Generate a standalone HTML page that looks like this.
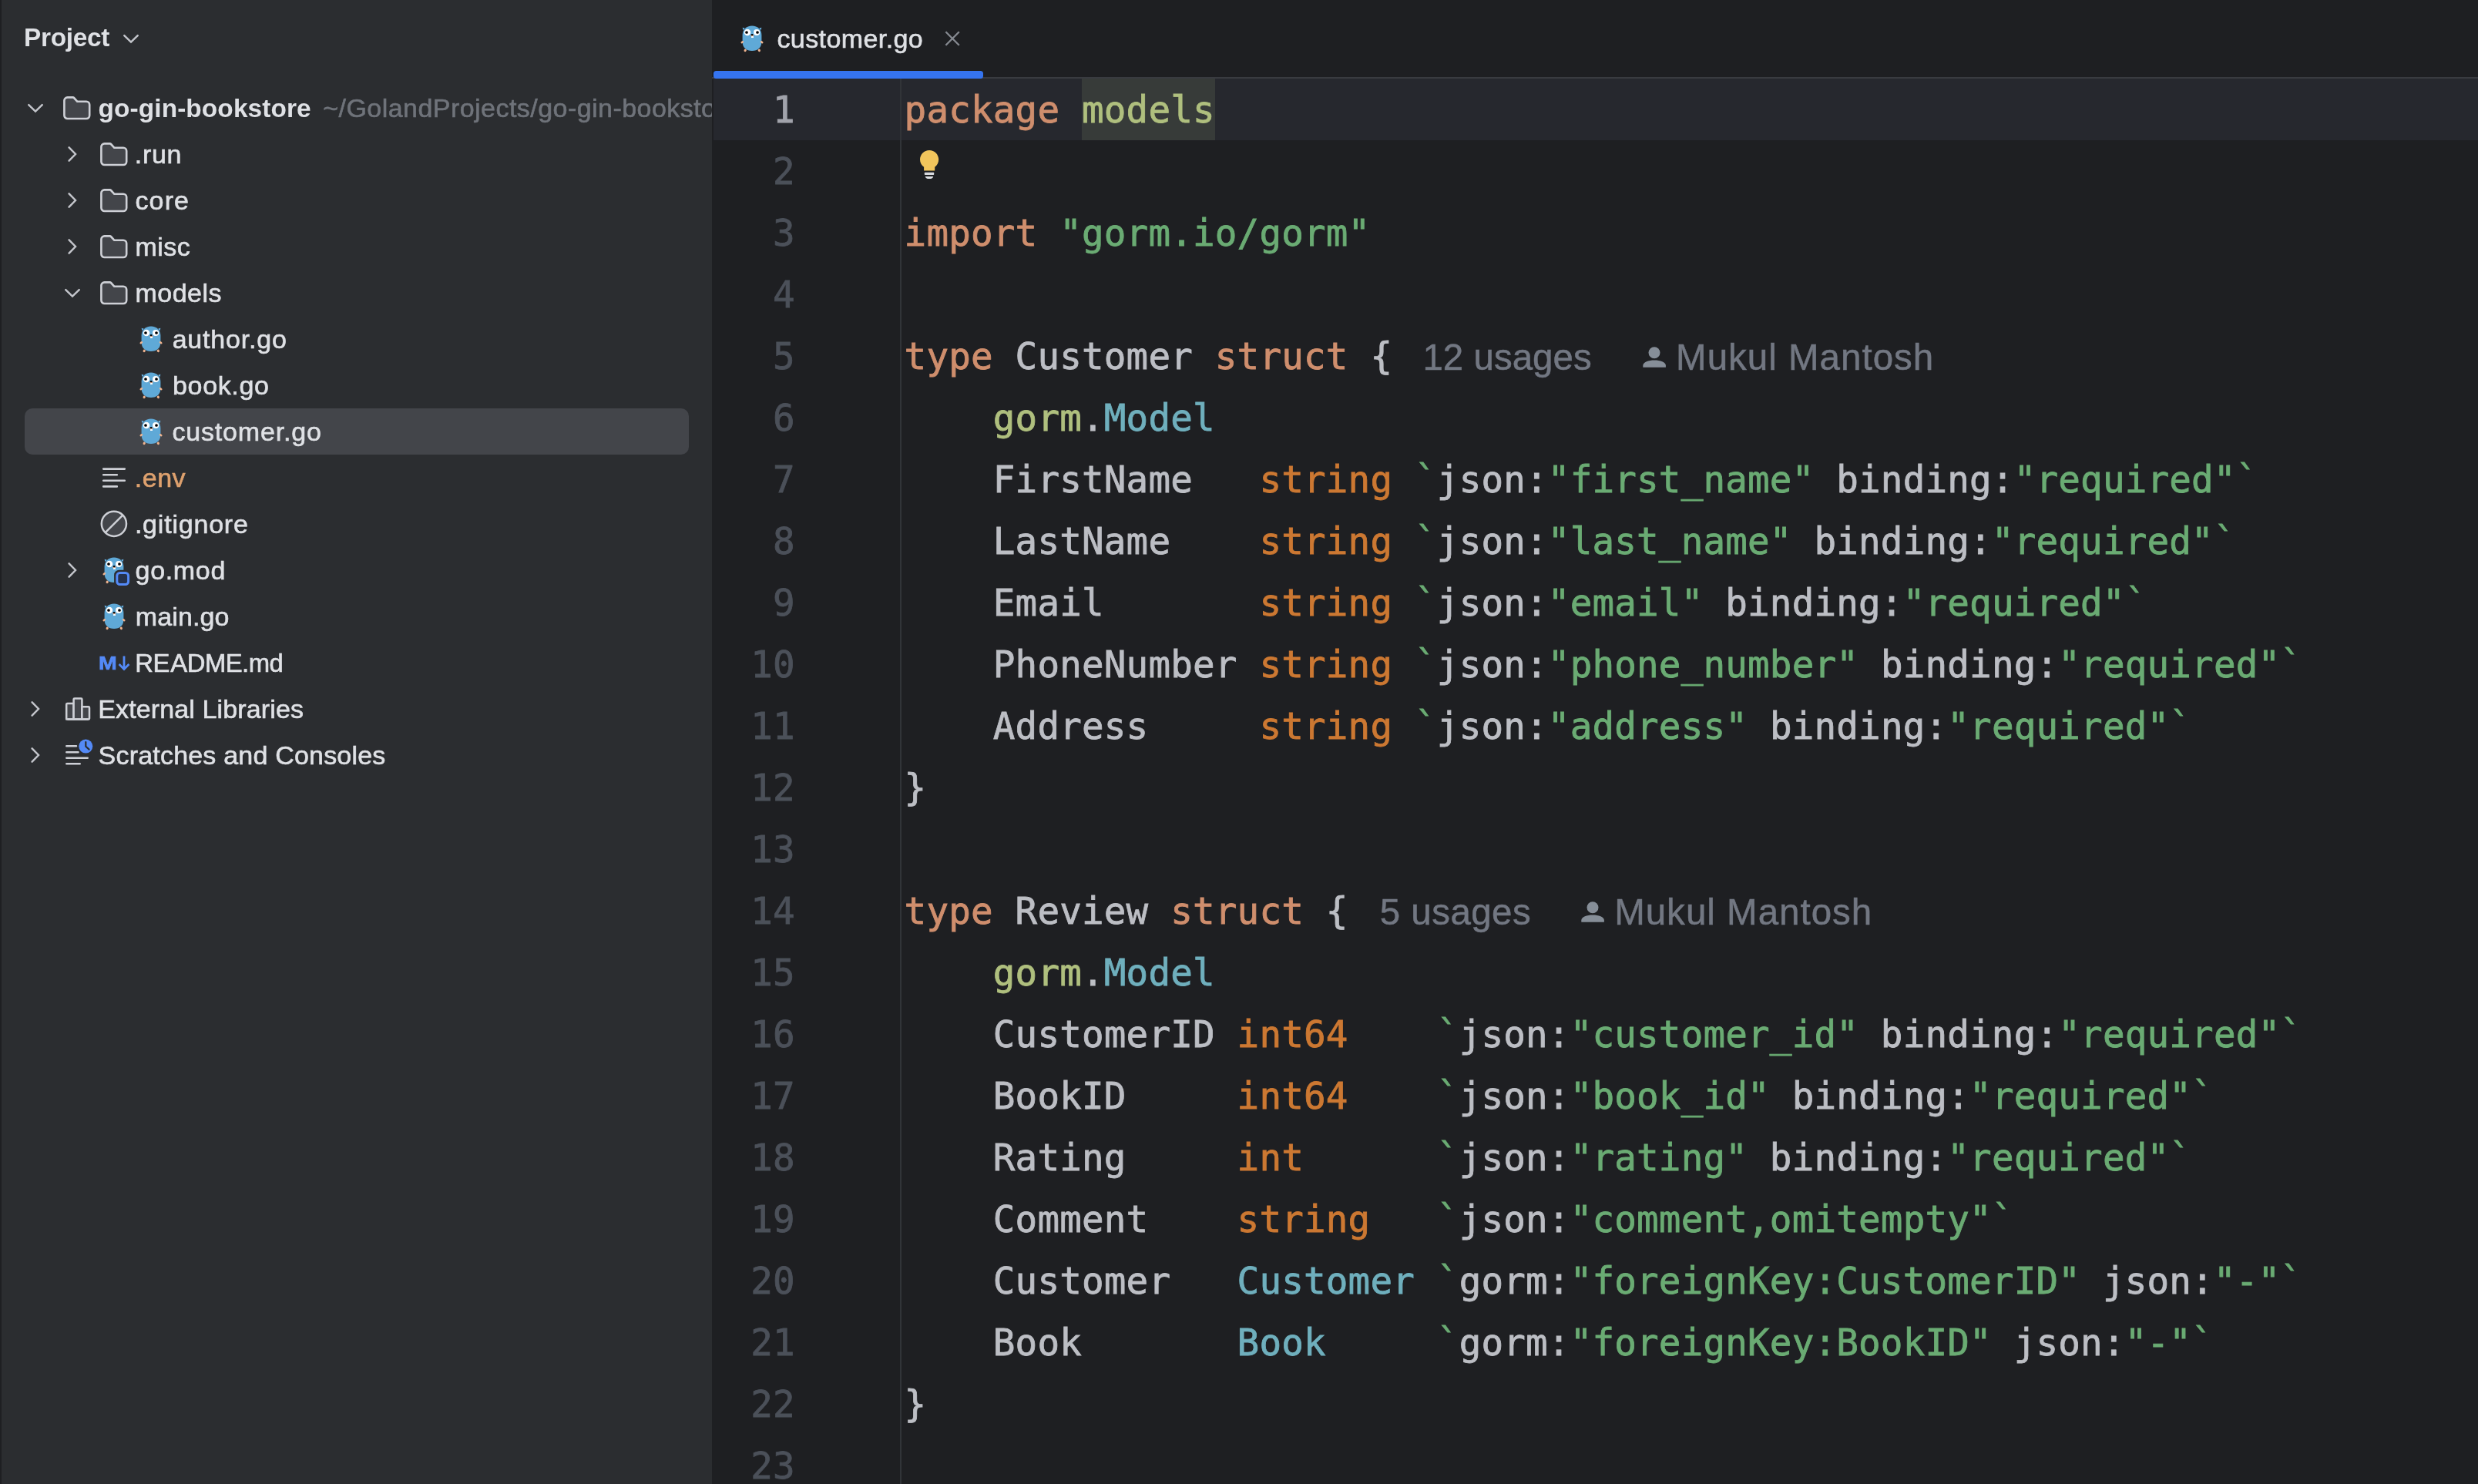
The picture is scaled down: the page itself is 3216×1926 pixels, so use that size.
<!DOCTYPE html>
<html lang="en"><head><meta charset="utf-8"><title>customer.go</title>
<style>
*{box-sizing:border-box}
html,body{margin:0;padding:0;width:3216px;height:1926px;overflow:hidden;background:#1e1f22}
body{position:relative;font-family:"Liberation Sans", "DejaVu Sans", sans-serif;-webkit-font-smoothing:antialiased}
.ic{position:absolute;display:block;overflow:visible}
#sidebg{position:absolute;left:0;top:0;width:924px;height:1926px;background:#2b2d30}
#side{position:absolute;left:0;top:0;width:924px;height:1926px;overflow:hidden;will-change:transform}
.edge{position:absolute;left:0;top:0;width:2px;height:1926px;background:#1e1f22}
.hdr{position:absolute;left:31px;top:19px;height:60px;line-height:60px;font-size:33.4px;font-weight:bold;color:#dfe1e5;white-space:nowrap}
.sel{position:absolute;left:32px;top:530px;width:862px;height:60px;border-radius:10px;background:#43454a}
.rt{position:absolute;height:60px;line-height:60px;font-size:34px;color:#dfe1e5;white-space:nowrap;-webkit-text-stroke-width:0.6px}
.rt.b{font-weight:bold;font-size:33.4px;-webkit-text-stroke-width:0;margin-top:1px}
.rt.g{color:#6f737a}
.md{position:absolute;height:60px;line-height:60px;font-size:24.6px;font-weight:bold;color:#548af7;-webkit-text-stroke:0.7px #548af7;transform:scaleX(1.16);transform-origin:left center}
#ed{position:absolute;left:0;top:0;width:3216px;height:1926px;will-change:transform}
.tabline{position:absolute;left:924px;top:100px;width:2292px;height:2px;background:#393b40}
.tabsel{position:absolute;left:926px;top:92px;width:350px;height:10px;background:#3574f0;border-radius:3.5px}
.tabt{position:absolute;left:1006px;top:20px;height:60px;line-height:60px;font-size:34px;color:#dfe1e5;white-space:nowrap;-webkit-text-stroke-width:0.6px}
.caret{position:absolute;left:926px;top:102px;width:2290px;height:80px;background:#26282e}
.gl{position:absolute;left:1168px;top:102px;width:2px;height:1824px;background:#313438}
.lns{position:absolute;left:926px;top:103px;width:105.8px;font-family:"DejaVu Sans Mono", "Liberation Mono", monospace;font-size:47.5px;letter-spacing:0.203px;color:#4b5059;text-align:right;-webkit-text-stroke-width:0.8px}
.lns div{height:80px;line-height:80px}
.lns .cur{color:#a1a3ab}
.code{position:absolute;left:1173.6px;top:103px;font-family:"DejaVu Sans Mono", "Liberation Mono", monospace;font-size:47.5px;letter-spacing:0.203px;color:#bcbec4;-webkit-text-stroke-width:0.8px}
.l{height:80px;line-height:80px;white-space:pre;overflow:visible}
.ck{color:#cf8e6d}.cs{color:#6aab73}.ct{color:#6fafbd}.cp,.ph{color:#afbf7e}.cb{color:#cc7832}
.ph{background:#373b39;display:inline-block;height:80px;vertical-align:top;margin-top:-1px;padding-top:1px}
.hint{position:absolute;height:80px;line-height:80px;font-size:47.5px;color:#727782;white-space:nowrap;-webkit-text-stroke-width:0.5px}
</style></head>
<body>
<div id="ed">
<div class="tabline"></div><div class="tabsel"></div>
<svg class="ic" style="left:958px;top:30px" width="40" height="44" viewBox="0 0 40 44"><g><path d="M5.7 5.8 L8.8 6.7 L6.3 9.1 Z" fill="#6ab7ea"/><path d="M30.3 5.8 L27.2 6.7 L29.7 9.1 Z" fill="#6ab7ea"/><ellipse cx="9.2" cy="35.4" rx="1.6" ry="1.8" transform="rotate(25 9.2 35.4)" fill="#f0b48f"/><ellipse cx="27.3" cy="35.4" rx="1.6" ry="1.8" transform="rotate(-25 27.3 35.4)" fill="#f0b48f"/><path d="M18 3.5 C25.6 3.5 30.4 8.6 30.4 15.8 V24.2 C30.4 31.4 25.6 36 18 36 C10.4 36 5.6 31.4 5.6 24.2 V15.8 C5.6 8.6 10.4 3.5 18 3.5 Z" fill="#5fa9d7"/><ellipse cx="5.3" cy="24.7" rx="2.1" ry="1.4" transform="rotate(-40 5.3 24.7)" fill="#f0b48f"/><ellipse cx="30.7" cy="24.7" rx="2.1" ry="1.4" transform="rotate(40 30.7 24.7)" fill="#f0b48f"/><circle cx="12" cy="12" r="4.25" fill="#fff"/><circle cx="24.1" cy="12" r="4.1" fill="#fff"/><circle cx="11" cy="12" r="1.85" fill="#000"/><circle cx="25" cy="12" r="1.85" fill="#000"/><ellipse cx="18.3" cy="16.3" rx="2.3" ry="1.2" fill="#d9a78c"/><ellipse cx="18.1" cy="15.2" rx="1.4" ry="1.1" fill="#000"/><rect x="17" y="17.1" width="3" height="2" rx=".4" fill="#fff"/></g></svg>
<div class="tabt" id="tabt" style="left:1008.48px;letter-spacing:0.403px">customer.go</div>
<svg class="ic" style="left:1224px;top:38px" width="24" height="24" viewBox="0 0 24 24"><path d="M3.4 3.2 L20.8 20.8 M20.8 3.2 L3.4 20.8" stroke="#868a91" stroke-width="2.3" fill="none"/></svg>
<div class="caret"></div><div class="gl"></div>
<svg class="ic" style="left:1193px;top:194px" width="27" height="40" viewBox="0 0 27 40"><path d="M13.1 .9 C19.8 .9 25.2 6.3 25.2 13 C25.2 17.4 23 20.6 20.2 22.7 V27.4 H6.1 V22.7 C3.2 20.6 1 17.4 1 13 C1 6.3 6.4 .9 13.1 .9 Z" fill="#f2c55c"/><rect x="6.8" y="29.8" width="12.4" height="3.1" rx=".7" fill="#d7d9de"/><path d="M7.8 34.9 H18.2 C18.2 36.9 16.2 38.1 13 38.1 C9.8 38.1 7.8 36.9 7.8 34.9 Z" fill="#dfe1e5"/></svg>
<div class="lns">
<div class=cur>1</div>
<div>2</div>
<div>3</div>
<div>4</div>
<div>5</div>
<div>6</div>
<div>7</div>
<div>8</div>
<div>9</div>
<div>10</div>
<div>11</div>
<div>12</div>
<div>13</div>
<div>14</div>
<div>15</div>
<div>16</div>
<div>17</div>
<div>18</div>
<div>19</div>
<div>20</div>
<div>21</div>
<div>22</div>
<div>23</div>
</div>
<div class="code">
<div class="l"><span class="ck">package</span> <span class="ph">models</span></div>
<div class="l">&nbsp;</div>
<div class="l"><span class="ck">import</span> <span class="cs">"gorm.io/gorm"</span></div>
<div class="l">&nbsp;</div>
<div class="l"><span class="ck">type</span> Customer <span class="ck">struct</span> {</div>
<div class="l">    <span class="cp">gorm</span>.<span class="ct">Model</span></div>
<div class="l">    FirstName   <span class="cb">string</span> <span class="cs">`</span>json:<span class="cs">"first_name"</span> binding:<span class="cs">"required"`</span></div>
<div class="l">    LastName    <span class="cb">string</span> <span class="cs">`</span>json:<span class="cs">"last_name"</span> binding:<span class="cs">"required"`</span></div>
<div class="l">    Email       <span class="cb">string</span> <span class="cs">`</span>json:<span class="cs">"email"</span> binding:<span class="cs">"required"`</span></div>
<div class="l">    PhoneNumber <span class="cb">string</span> <span class="cs">`</span>json:<span class="cs">"phone_number"</span> binding:<span class="cs">"required"`</span></div>
<div class="l">    Address     <span class="cb">string</span> <span class="cs">`</span>json:<span class="cs">"address"</span> binding:<span class="cs">"required"`</span></div>
<div class="l">}</div>
<div class="l">&nbsp;</div>
<div class="l"><span class="ck">type</span> Review <span class="ck">struct</span> {</div>
<div class="l">    <span class="cp">gorm</span>.<span class="ct">Model</span></div>
<div class="l">    CustomerID <span class="cb">int64</span>    <span class="cs">`</span>json:<span class="cs">"customer_id"</span> binding:<span class="cs">"required"`</span></div>
<div class="l">    BookID     <span class="cb">int64</span>    <span class="cs">`</span>json:<span class="cs">"book_id"</span> binding:<span class="cs">"required"`</span></div>
<div class="l">    Rating     <span class="cb">int</span>      <span class="cs">`</span>json:<span class="cs">"rating"</span> binding:<span class="cs">"required"`</span></div>
<div class="l">    Comment    <span class="cb">string</span>   <span class="cs">`</span>json:<span class="cs">"comment,omitempty"`</span></div>
<div class="l">    Customer   <span class="ct">Customer</span> <span class="cs">`</span>gorm:<span class="cs">"foreignKey:CustomerID"</span> json:<span class="cs">"-"`</span></div>
<div class="l">    Book       <span class="ct">Book</span>     <span class="cs">`</span>gorm:<span class="cs">"foreignKey:BookID"</span> json:<span class="cs">"-"`</span></div>
<div class="l">}</div>
<div class="l">&nbsp;</div>
</div>
<div class="hint" id="h1" style="left:1846.4px;top:424.4px;letter-spacing:0.016px">12 usages</div>
<svg class="ic" style="left:2131.2px;top:450.2px" width="32" height="28" viewBox="0 0 32 28"><circle cx="16" cy="7.8" r="7.5" fill="#868e98"/><path d="M1.3 26.8 V24.4 C1.3 20 8.5 17.6 16.1 17.6 C23.7 17.6 30.9 20 30.9 24.4 V26.8 Z" fill="#868e98"/></svg>
<div class="hint" id="h2" style="left:2175.11px;top:424.4px;letter-spacing:1.003px">Mukul Mantosh</div>
<div class="hint" id="h3" style="left:1790.86px;top:1144.4px;letter-spacing:0.436px">5 usages</div>
<svg class="ic" style="left:2051.0px;top:1170.2px" width="32" height="28" viewBox="0 0 32 28"><circle cx="16" cy="7.8" r="7.5" fill="#868e98"/><path d="M1.3 26.8 V24.4 C1.3 20 8.5 17.6 16.1 17.6 C23.7 17.6 30.9 20 30.9 24.4 V26.8 Z" fill="#868e98"/></svg>
<div class="hint" id="h4" style="left:2095.14px;top:1144.4px;letter-spacing:1.006px">Mukul Mantosh</div>
</div>
<div id="sidebg"></div>
<div id="side">
<div class="edge"></div>
<div class="hdr" id="hdr" style="left:31.1px;letter-spacing:-0.329px">Project</div>
<svg class="ic" style="left:157.3px;top:42.2px" width="26" height="16" viewBox="0 0 26 16"><path d="M4.3 4.1 L13 12.6 L21.7 4.1" fill="none" stroke="#c3c5cb" stroke-width="2.5" stroke-linecap="round" stroke-linejoin="miter"/></svg>
<div class="sel"></div>
<svg class="ic" style="left:33px;top:132.2px" width="26" height="16" viewBox="0 0 26 16"><path d="M4.3 4.1 L13 12.6 L21.7 4.1" fill="none" stroke="#c3c5cb" stroke-width="2.5" stroke-linecap="round" stroke-linejoin="miter"/></svg>
<svg class="ic" style="left:82px;top:124.5px" width="36" height="31" viewBox="0 0 36 31"><path d="M1.4 5.6 A4.2 4.2 0 0 1 5.6 1.4 H12.5 a2 2 0 0 1 1.5 .6 L18.4 6.8 H30 A4.2 4.2 0 0 1 34.2 11 V24.8 A4.2 4.2 0 0 1 30 29 H5.6 A4.2 4.2 0 0 1 1.4 24.8 Z" fill="#43454a" stroke="#ced0d6" stroke-width="2.6" stroke-linejoin="round"/></svg>
<div class="rt b" id="r0" style="left:127.52px;top:110px;letter-spacing:0.107px;">go-gin-bookstore</div>
<div class="rt g" style="left:419.2px;top:110px;letter-spacing:0.457px"><span id="rx" class="sub">~/GolandProjects/go-gin-bookst</span>ore</div>
<svg class="ic" style="left:86px;top:187px" width="16" height="26" viewBox="0 0 16 26"><path d="M3.6 4.3 L12 13 L3.6 21.7" fill="none" stroke="#c3c5cb" stroke-width="2.5" stroke-linecap="round" stroke-linejoin="miter"/></svg>
<svg class="ic" style="left:130px;top:184.5px" width="36" height="31" viewBox="0 0 36 31"><path d="M1.4 5.6 A4.2 4.2 0 0 1 5.6 1.4 H12.5 a2 2 0 0 1 1.5 .6 L18.4 6.8 H30 A4.2 4.2 0 0 1 34.2 11 V24.8 A4.2 4.2 0 0 1 30 29 H5.6 A4.2 4.2 0 0 1 1.4 24.8 Z" fill="#43454a" stroke="#ced0d6" stroke-width="2.6" stroke-linejoin="round"/></svg>
<div class="rt" id="r1" style="left:174.72px;top:170px;letter-spacing:0.731px;">.run</div>
<svg class="ic" style="left:86px;top:247px" width="16" height="26" viewBox="0 0 16 26"><path d="M3.6 4.3 L12 13 L3.6 21.7" fill="none" stroke="#c3c5cb" stroke-width="2.5" stroke-linecap="round" stroke-linejoin="miter"/></svg>
<svg class="ic" style="left:130px;top:244.5px" width="36" height="31" viewBox="0 0 36 31"><path d="M1.4 5.6 A4.2 4.2 0 0 1 5.6 1.4 H12.5 a2 2 0 0 1 1.5 .6 L18.4 6.8 H30 A4.2 4.2 0 0 1 34.2 11 V24.8 A4.2 4.2 0 0 1 30 29 H5.6 A4.2 4.2 0 0 1 1.4 24.8 Z" fill="#43454a" stroke="#ced0d6" stroke-width="2.6" stroke-linejoin="round"/></svg>
<div class="rt" id="r2" style="left:175.43px;top:230px;letter-spacing:1.156px;">core</div>
<svg class="ic" style="left:86px;top:307px" width="16" height="26" viewBox="0 0 16 26"><path d="M3.6 4.3 L12 13 L3.6 21.7" fill="none" stroke="#c3c5cb" stroke-width="2.5" stroke-linecap="round" stroke-linejoin="miter"/></svg>
<svg class="ic" style="left:130px;top:304.5px" width="36" height="31" viewBox="0 0 36 31"><path d="M1.4 5.6 A4.2 4.2 0 0 1 5.6 1.4 H12.5 a2 2 0 0 1 1.5 .6 L18.4 6.8 H30 A4.2 4.2 0 0 1 34.2 11 V24.8 A4.2 4.2 0 0 1 30 29 H5.6 A4.2 4.2 0 0 1 1.4 24.8 Z" fill="#43454a" stroke="#ced0d6" stroke-width="2.6" stroke-linejoin="round"/></svg>
<div class="rt" id="r3" style="left:175.44px;top:290px;letter-spacing:0.502px;">misc</div>
<svg class="ic" style="left:81px;top:372.2px" width="26" height="16" viewBox="0 0 26 16"><path d="M4.3 4.1 L13 12.6 L21.7 4.1" fill="none" stroke="#c3c5cb" stroke-width="2.5" stroke-linecap="round" stroke-linejoin="miter"/></svg>
<svg class="ic" style="left:130px;top:364.5px" width="36" height="31" viewBox="0 0 36 31"><path d="M1.4 5.6 A4.2 4.2 0 0 1 5.6 1.4 H12.5 a2 2 0 0 1 1.5 .6 L18.4 6.8 H30 A4.2 4.2 0 0 1 34.2 11 V24.8 A4.2 4.2 0 0 1 30 29 H5.6 A4.2 4.2 0 0 1 1.4 24.8 Z" fill="#43454a" stroke="#ced0d6" stroke-width="2.6" stroke-linejoin="round"/></svg>
<div class="rt" id="r4" style="left:175.44px;top:350px;letter-spacing:0.5px;">models</div>
<svg class="ic" style="left:178px;top:420px" width="40" height="44" viewBox="0 0 40 44"><g><path d="M5.7 5.8 L8.8 6.7 L6.3 9.1 Z" fill="#6ab7ea"/><path d="M30.3 5.8 L27.2 6.7 L29.7 9.1 Z" fill="#6ab7ea"/><ellipse cx="9.2" cy="35.4" rx="1.6" ry="1.8" transform="rotate(25 9.2 35.4)" fill="#f0b48f"/><ellipse cx="27.3" cy="35.4" rx="1.6" ry="1.8" transform="rotate(-25 27.3 35.4)" fill="#f0b48f"/><path d="M18 3.5 C25.6 3.5 30.4 8.6 30.4 15.8 V24.2 C30.4 31.4 25.6 36 18 36 C10.4 36 5.6 31.4 5.6 24.2 V15.8 C5.6 8.6 10.4 3.5 18 3.5 Z" fill="#5fa9d7"/><ellipse cx="5.3" cy="24.7" rx="2.1" ry="1.4" transform="rotate(-40 5.3 24.7)" fill="#f0b48f"/><ellipse cx="30.7" cy="24.7" rx="2.1" ry="1.4" transform="rotate(40 30.7 24.7)" fill="#f0b48f"/><circle cx="12" cy="12" r="4.25" fill="#fff"/><circle cx="24.1" cy="12" r="4.1" fill="#fff"/><circle cx="11" cy="12" r="1.85" fill="#000"/><circle cx="25" cy="12" r="1.85" fill="#000"/><ellipse cx="18.3" cy="16.3" rx="2.3" ry="1.2" fill="#d9a78c"/><ellipse cx="18.1" cy="15.2" rx="1.4" ry="1.1" fill="#000"/><rect x="17" y="17.1" width="3" height="2" rx=".4" fill="#fff"/></g></svg>
<div class="rt" id="r5" style="left:223.65px;top:410px;letter-spacing:0.799px;">author.go</div>
<svg class="ic" style="left:178px;top:480px" width="40" height="44" viewBox="0 0 40 44"><g><path d="M5.7 5.8 L8.8 6.7 L6.3 9.1 Z" fill="#6ab7ea"/><path d="M30.3 5.8 L27.2 6.7 L29.7 9.1 Z" fill="#6ab7ea"/><ellipse cx="9.2" cy="35.4" rx="1.6" ry="1.8" transform="rotate(25 9.2 35.4)" fill="#f0b48f"/><ellipse cx="27.3" cy="35.4" rx="1.6" ry="1.8" transform="rotate(-25 27.3 35.4)" fill="#f0b48f"/><path d="M18 3.5 C25.6 3.5 30.4 8.6 30.4 15.8 V24.2 C30.4 31.4 25.6 36 18 36 C10.4 36 5.6 31.4 5.6 24.2 V15.8 C5.6 8.6 10.4 3.5 18 3.5 Z" fill="#5fa9d7"/><ellipse cx="5.3" cy="24.7" rx="2.1" ry="1.4" transform="rotate(-40 5.3 24.7)" fill="#f0b48f"/><ellipse cx="30.7" cy="24.7" rx="2.1" ry="1.4" transform="rotate(40 30.7 24.7)" fill="#f0b48f"/><circle cx="12" cy="12" r="4.25" fill="#fff"/><circle cx="24.1" cy="12" r="4.1" fill="#fff"/><circle cx="11" cy="12" r="1.85" fill="#000"/><circle cx="25" cy="12" r="1.85" fill="#000"/><ellipse cx="18.3" cy="16.3" rx="2.3" ry="1.2" fill="#d9a78c"/><ellipse cx="18.1" cy="15.2" rx="1.4" ry="1.1" fill="#000"/><rect x="17" y="17.1" width="3" height="2" rx=".4" fill="#fff"/></g></svg>
<div class="rt" id="r6" style="left:224.06px;top:470px;letter-spacing:0.643px;">book.go</div>
<svg class="ic" style="left:178px;top:540px" width="40" height="44" viewBox="0 0 40 44"><g><path d="M5.7 5.8 L8.8 6.7 L6.3 9.1 Z" fill="#6ab7ea"/><path d="M30.3 5.8 L27.2 6.7 L29.7 9.1 Z" fill="#6ab7ea"/><ellipse cx="9.2" cy="35.4" rx="1.6" ry="1.8" transform="rotate(25 9.2 35.4)" fill="#f0b48f"/><ellipse cx="27.3" cy="35.4" rx="1.6" ry="1.8" transform="rotate(-25 27.3 35.4)" fill="#f0b48f"/><path d="M18 3.5 C25.6 3.5 30.4 8.6 30.4 15.8 V24.2 C30.4 31.4 25.6 36 18 36 C10.4 36 5.6 31.4 5.6 24.2 V15.8 C5.6 8.6 10.4 3.5 18 3.5 Z" fill="#5fa9d7"/><ellipse cx="5.3" cy="24.7" rx="2.1" ry="1.4" transform="rotate(-40 5.3 24.7)" fill="#f0b48f"/><ellipse cx="30.7" cy="24.7" rx="2.1" ry="1.4" transform="rotate(40 30.7 24.7)" fill="#f0b48f"/><circle cx="12" cy="12" r="4.25" fill="#fff"/><circle cx="24.1" cy="12" r="4.1" fill="#fff"/><circle cx="11" cy="12" r="1.85" fill="#000"/><circle cx="25" cy="12" r="1.85" fill="#000"/><ellipse cx="18.3" cy="16.3" rx="2.3" ry="1.2" fill="#d9a78c"/><ellipse cx="18.1" cy="15.2" rx="1.4" ry="1.1" fill="#000"/><rect x="17" y="17.1" width="3" height="2" rx=".4" fill="#fff"/></g></svg>
<div class="rt" id="r7" style="left:223.53px;top:530px;letter-spacing:0.808px;">customer.go</div>
<svg class="ic" style="left:130px;top:604px" width="36" height="32" viewBox="0 0 36 32"><g stroke="#ced0d6" stroke-width="2.6" stroke-linecap="round"><path d="M4.2 4.6 H31.8 M4.2 12.2 H21.8 M4.2 19.8 H31.8 M4.2 27.4 H21.8"/></g></svg>
<div class="rt" id="r8" style="left:174.83px;top:590px;letter-spacing:0.475px;color:#dea16e;">.env</div>
<svg class="ic" style="left:130px;top:662px" width="36" height="36" viewBox="0 0 36 36"><circle cx="17.9" cy="17.8" r="16.1" fill="#43454a" stroke="#ced0d6" stroke-width="2.5"/><path d="M7 28.8 L29 6.8" stroke="#ced0d6" stroke-width="2.5"/></svg>
<div class="rt" id="r9" style="left:174.88px;top:650px;letter-spacing:0.79px;">.gitignore</div>
<svg class="ic" style="left:86px;top:727px" width="16" height="26" viewBox="0 0 16 26"><path d="M3.6 4.3 L12 13 L3.6 21.7" fill="none" stroke="#c3c5cb" stroke-width="2.5" stroke-linecap="round" stroke-linejoin="miter"/></svg>
<svg class="ic" style="left:130px;top:720px" width="40" height="44" viewBox="0 0 40 44"><defs><mask id="gm"><rect width="40" height="44" fill="#fff"/><rect x="18.1" y="19.7" width="22.2" height="22.5" rx="6.5" fill="#000"/></mask></defs><g mask="url(#gm)"><path d="M5.7 5.8 L8.8 6.7 L6.3 9.1 Z" fill="#6ab7ea"/><path d="M30.3 5.8 L27.2 6.7 L29.7 9.1 Z" fill="#6ab7ea"/><ellipse cx="9.2" cy="35.4" rx="1.6" ry="1.8" transform="rotate(25 9.2 35.4)" fill="#f0b48f"/><ellipse cx="27.3" cy="35.4" rx="1.6" ry="1.8" transform="rotate(-25 27.3 35.4)" fill="#f0b48f"/><path d="M18 3.5 C25.6 3.5 30.4 8.6 30.4 15.8 V24.2 C30.4 31.4 25.6 36 18 36 C10.4 36 5.6 31.4 5.6 24.2 V15.8 C5.6 8.6 10.4 3.5 18 3.5 Z" fill="#5fa9d7"/><ellipse cx="5.3" cy="24.7" rx="2.1" ry="1.4" transform="rotate(-40 5.3 24.7)" fill="#f0b48f"/><ellipse cx="30.7" cy="24.7" rx="2.1" ry="1.4" transform="rotate(40 30.7 24.7)" fill="#f0b48f"/><circle cx="12" cy="12" r="4.25" fill="#fff"/><circle cx="24.1" cy="12" r="4.1" fill="#fff"/><circle cx="11" cy="12" r="1.85" fill="#000"/><circle cx="25" cy="12" r="1.85" fill="#000"/><ellipse cx="18.3" cy="16.3" rx="2.3" ry="1.2" fill="#d9a78c"/><ellipse cx="18.1" cy="15.2" rx="1.4" ry="1.1" fill="#000"/><rect x="17" y="17.1" width="3" height="2" rx=".4" fill="#fff"/></g><rect x="21.8" y="23.4" width="14.8" height="15.1" rx="3.8" fill="#25324d" stroke="#548af7" stroke-width="3"/></svg>
<div class="rt" id="r10" style="left:175.57px;top:710px;letter-spacing:0.669px;">go.mod</div>
<svg class="ic" style="left:130px;top:780px" width="40" height="44" viewBox="0 0 40 44"><g><path d="M5.7 5.8 L8.8 6.7 L6.3 9.1 Z" fill="#6ab7ea"/><path d="M30.3 5.8 L27.2 6.7 L29.7 9.1 Z" fill="#6ab7ea"/><ellipse cx="9.2" cy="35.4" rx="1.6" ry="1.8" transform="rotate(25 9.2 35.4)" fill="#f0b48f"/><ellipse cx="27.3" cy="35.4" rx="1.6" ry="1.8" transform="rotate(-25 27.3 35.4)" fill="#f0b48f"/><path d="M18 3.5 C25.6 3.5 30.4 8.6 30.4 15.8 V24.2 C30.4 31.4 25.6 36 18 36 C10.4 36 5.6 31.4 5.6 24.2 V15.8 C5.6 8.6 10.4 3.5 18 3.5 Z" fill="#5fa9d7"/><ellipse cx="5.3" cy="24.7" rx="2.1" ry="1.4" transform="rotate(-40 5.3 24.7)" fill="#f0b48f"/><ellipse cx="30.7" cy="24.7" rx="2.1" ry="1.4" transform="rotate(40 30.7 24.7)" fill="#f0b48f"/><circle cx="12" cy="12" r="4.25" fill="#fff"/><circle cx="24.1" cy="12" r="4.1" fill="#fff"/><circle cx="11" cy="12" r="1.85" fill="#000"/><circle cx="25" cy="12" r="1.85" fill="#000"/><ellipse cx="18.3" cy="16.3" rx="2.3" ry="1.2" fill="#d9a78c"/><ellipse cx="18.1" cy="15.2" rx="1.4" ry="1.1" fill="#000"/><rect x="17" y="17.1" width="3" height="2" rx=".4" fill="#fff"/></g></svg>
<div class="rt" id="r11" style="left:175.74px;top:770px;letter-spacing:0.119px;">main.go</div>
<span class="md" style="left:127.7px;top:831px">M</span><svg class="ic" style="left:152px;top:848px" width="18" height="24" viewBox="0 0 18 24"><path d="M9 3.6 V20.4 M2.6 14 L9 20.6 L15.4 14" fill="none" stroke="#548af7" stroke-width="2.8" stroke-linejoin="miter"/></svg>
<div class="rt" id="r12" style="left:175.21px;top:830px;letter-spacing:-0.489px;font-size:32.8px;margin-top:1px;">R<span style="letter-spacing:1px">E</span>ADME.md</div>
<svg class="ic" style="left:38px;top:907px" width="16" height="26" viewBox="0 0 16 26"><path d="M3.6 4.3 L12 13 L3.6 21.7" fill="none" stroke="#c3c5cb" stroke-width="2.5" stroke-linecap="round" stroke-linejoin="miter"/></svg>
<svg class="ic" style="left:81.5px;top:904px" width="36" height="32" viewBox="0 0 36 32"><g fill="#43454a" stroke="#ced0d6" stroke-width="2.5" stroke-linejoin="round"><path d="M4.2 29.6 V10.2 a1.2 1.2 0 0 1 1.2 -1.2 H13.6 V29.6 Z"/><path d="M13.6 29.6 V3.6 a1.2 1.2 0 0 1 1.2 -1.2 H23.2 a1.2 1.2 0 0 1 1.2 1.2 V29.6 Z"/><path d="M24.4 29.6 V13.2 H32.8 a1.2 1.2 0 0 1 1.2 1.2 V28.4 a1.2 1.2 0 0 1 -1.2 1.2 Z"/><path d="M5.4 29.6 H32.8" fill="none"/></g></svg>
<div class="rt" id="r13" style="left:127.29px;top:890px;letter-spacing:0.126px;">External Libraries</div>
<svg class="ic" style="left:38px;top:967px" width="16" height="26" viewBox="0 0 16 26"><path d="M3.6 4.3 L12 13 L3.6 21.7" fill="none" stroke="#c3c5cb" stroke-width="2.5" stroke-linecap="round" stroke-linejoin="miter"/></svg>
<svg class="ic" style="left:81.6px;top:958.3px" width="40" height="40" viewBox="0 0 40 40"><g stroke="#ced0d6" stroke-width="2.5" stroke-linecap="round"><path d="M4.3 10.3 H17 M4.3 18.2 H19.5 M4.3 25.8 H31.7 M4.3 33.3 H21.7"/></g><circle cx="29.3" cy="10.6" r="9" fill="#548af7"/><path d="M29.3 5 V10.8 L33.6 14.6" fill="none" stroke="#2b2d30" stroke-width="2.2" stroke-linecap="round" stroke-linejoin="round"/></svg>
<div class="rt" id="r14" style="left:127.59px;top:950px;letter-spacing:0.2px;">Scratches and Consoles</div>
</div>
</body></html>
